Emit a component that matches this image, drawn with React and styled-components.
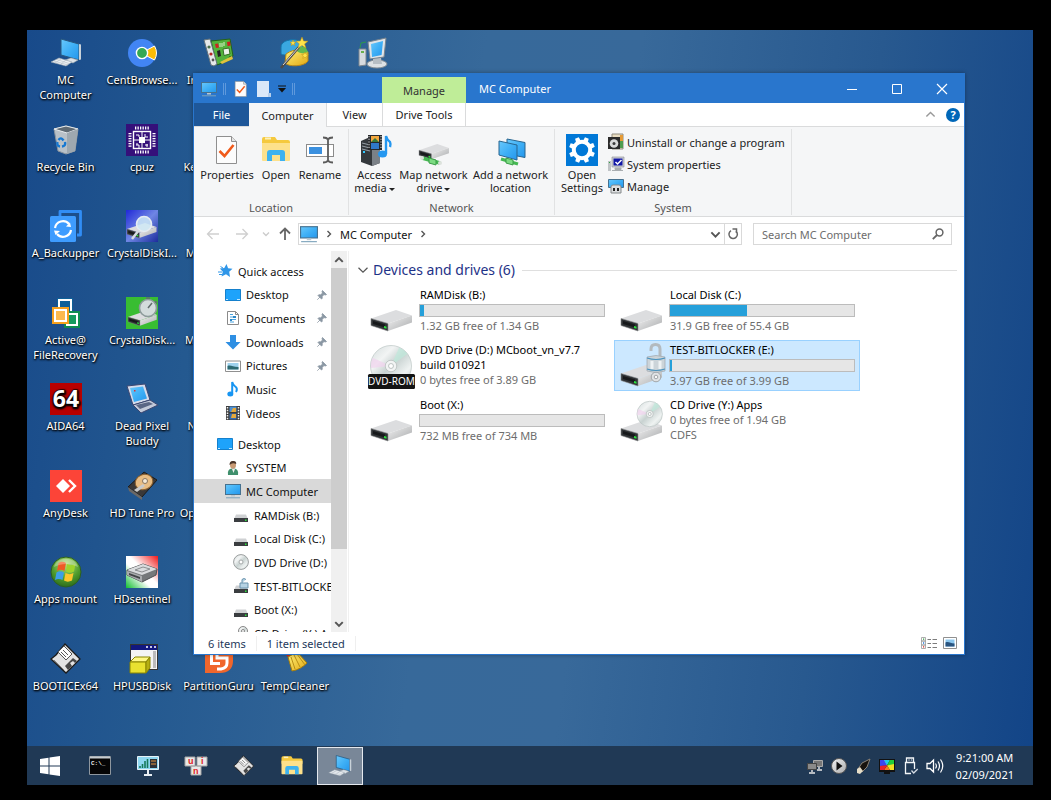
import { useState } from "react";
import styled, { createGlobalStyle } from "styled-components";

const GlobalStyle = createGlobalStyle`
    * {
        box-sizing: border-box;
    }

    body {
        margin: 0;
        background: #000;
        font-family: "Noto Sans", "Open Sans", sans-serif;
        font-size: 11px;
        line-height: 15px;
        color: #111;
    }

    button,
    input {
        font: inherit;
        color: inherit;
        margin: 0;
        padding: 0;
        border: 0;
        background: none;
    }

    svg {
        display: block;
        flex: none;
        overflow: visible;
    }
`;

/* ---------- shell ---------- */

const Frame = styled.div`
    min-height: 100vh;
    padding: 30px 18px 15px 27px;
    display: flex;
`;

const Screen = styled.div`
    position: relative;
    flex: 1;
    min-width: 0;
    display: flex;
    flex-direction: column;
    overflow: hidden;
    background: linear-gradient(97deg, #184a8a 0%, #245990 18%, #37699a 42%, #38699a 56%, #28598f 78%, #124487 100%);
`;

const Desktop = styled.main`
    flex: 1;
    display: grid;
    grid-auto-flow: column;
    grid-template-rows: 87px 86px 87px 86px 87px 86px 87px 86px;
    grid-auto-columns: 77px 76px;
    padding-top: 7px;
`;

const Shortcut = styled.button`
    display: flex;
    flex-direction: column;
    align-items: center;
    gap: 3px;
    color: #fff;
    text-align: center;
    text-shadow: 1px 1px 2px #000, 0 1px 2px #000;
    white-space: pre;
`;

/* ---------- explorer window ---------- */

const Window = styled.section`
    position: absolute;
    top: 43px;
    right: 68px;
    bottom: 130px;
    left: 166px;
    display: flex;
    flex-direction: column;
    border: 1px solid #2976cd;
    background: #fff;
    box-shadow: 0 0 4px rgba(0, 0, 0, 0.35);
`;

const TitleBar = styled.header`
    display: flex;
    height: 29px;
    background: #2976cd;
    color: #fff;
`;

const QuickTools = styled.div`
    width: 188px;
    display: flex;
    align-items: center;
    gap: 6px;
    padding-left: 7px;
`;

const QuickSeparator = styled.i`
    width: 3px;
    height: 12px;
    border: solid #5f99dc;
    border-width: 0 1px;
`;

const ContextTab = styled.div`
    width: 84px;
    margin-top: 3px;
    display: flex;
    align-items: center;
    justify-content: center;
    background: #bfed98;
    color: #333;
`;

const WindowTitle = styled.h1`
    flex: 1;
    margin: 0;
    padding-left: 13px;
    font-size: 11px;
    font-weight: 400;
    line-height: 29px;
`;

const CaptionButton = styled.button`
    width: 45px;
    display: grid;
    place-items: center;
`;

const TabRow = styled.nav`
    display: flex;
    height: 24px;
    border-bottom: 1px solid #dadbdc;
`;

const RibbonTab = styled.button`
    width: ${({ $width }) => $width};
    margin-bottom: ${({ $active }) => ($active ? "-1px" : "0")};
    background: ${({ $active, $file }) => ($file ? "#1e5799" : $active ? "#f5f6f7" : "transparent")};
    color: ${({ $file }) => ($file ? "#fff" : "#222")};
    border-right: ${({ $line }) => ($line ? "1px solid #dadbdc" : "0")};
`;

const TabRowEnd = styled.div`
    flex: 1;
    display: flex;
    align-items: center;
    justify-content: flex-end;
    gap: 10px;
    padding-right: 4px;
`;

const Ribbon = styled.div`
    display: flex;
    height: 90px;
    padding: 2px 0 1px;
    background: #f5f6f7;
    border-bottom: 1px solid #dadbdc;
`;

const RibbonGroup = styled.section`
    width: ${({ $width }) => $width};
    display: flex;
    flex-direction: column;
    justify-content: space-between;
    border-right: 1px solid #e1e2e3;
    color: #222;
`;

const GroupBody = styled.div`
    display: flex;
    justify-content: ${({ $start }) => ($start ? "flex-start" : "center")};
    padding-top: 2px;
    padding-left: ${({ $start }) => ($start ? "5px" : "0")};
`;

const GroupName = styled.span`
    text-align: center;
    color: #555;
`;

const RibbonButton = styled.button`
    width: ${({ $width }) => $width};
    flex: none;
    display: flex;
    flex-direction: column;
    align-items: center;
    gap: 2px;
    padding-top: 3px;
    line-height: 13px;
    white-space: pre;
`;

const MarkWrap = styled.span`
    display: inline-block;
    vertical-align: middle;
    margin-left: 2px;
`;

const RibbonList = styled.div`
    display: flex;
    flex-direction: column;
    padding-left: 4px;
`;

const RibbonListButton = styled.button`
    height: 22px;
    display: flex;
    align-items: center;
    gap: 3px;
    white-space: nowrap;
`;

const AddressRow = styled.div`
    display: flex;
    align-items: center;
    height: 34px;
    padding: 0 12px 0 4px;
`;

const HistoryButton = styled.button`
    width: ${({ $narrow }) => ($narrow ? "19px" : "29px")};
    height: 22px;
    display: grid;
    place-items: center;
`;

const AddressBox = styled.div`
    flex: 1;
    height: 22px;
    display: flex;
    align-items: center;
    gap: 7px;
    margin-left: 4px;
    padding-left: 1px;
    border: 1px solid #d9d9d9;
`;

const AddressTools = styled.div`
    display: flex;
    align-self: stretch;
    margin-left: auto;
`;

const AddressTool = styled.button`
    width: 17px;
    display: grid;
    place-items: center;
    border-left: ${({ $line }) => ($line ? "1px solid #d9d9d9" : "0")};
`;

const SearchBox = styled.label`
    width: 199px;
    height: 22px;
    display: flex;
    align-items: center;
    margin-left: 11px;
    padding: 0 7px 0 8px;
    border: 1px solid #d9d9d9;

    input {
        flex: 1;
        min-width: 0;
        outline: 0;
    }

    input::placeholder {
        color: #6d6d6d;
        opacity: 1;
    }
`;

const Panes = styled.div`
    flex: 1;
    min-height: 0;
    display: flex;
`;

const NavPane = styled.nav`
    width: 137px;
    flex: none;
    overflow: hidden;
    padding-top: 8px;
`;

const NavGroup = styled.div`
    display: grid;
    grid-auto-rows: 24px 23px 24px;
    margin-bottom: 7px;
`;

const NavItem = styled.button`
    display: flex;
    align-items: center;
    gap: 5px;
    min-width: 0;
    padding-left: ${({ $level }) => 23 + $level * 8}px;
    padding-right: 4px;
    background: ${({ $selected }) => ($selected ? "#d9d9d9" : "transparent")};
    white-space: nowrap;

    svg:last-child:not(:first-child) {
        margin-left: auto;
    }
`;

const ScrollBar = styled.div`
    width: 16px;
    flex: none;
    display: flex;
    flex-direction: column;
    background: #f0f0f0;
`;

const ScrollButton = styled.button`
    height: 17px;
    display: grid;
    place-items: center;
`;

const ScrollTrack = styled.div`
    flex: 1;
`;

const ScrollThumb = styled.div`
    background: #cdcdcd;
`;

const Content = styled.div`
    flex: 1;
    min-width: 0;
    margin-left: 1px;
    border-left: 1px solid #f0f0f0;
    padding: 9px 7px 0 8px;
`;

const SectionHead = styled.h2`
    display: flex;
    align-items: center;
    gap: 4px;
    margin: 0;
    font-size: 14px;
    font-weight: 400;
    line-height: 20px;
    color: #1e3287;

    &::after {
        content: "";
        flex: 1;
        height: 1px;
        margin-left: 3px;
        background: #dfdfdf;
    }
`;

const DriveGrid = styled.div`
    display: grid;
    grid-template-columns: repeat(auto-fill, 246px);
    grid-auto-rows: 51px;
    gap: 4px;
    margin-top: 5px;
    padding-left: 7px;
`;

const DriveTile = styled.button`
    display: flex;
    gap: 3px;
    padding: 1px 3px;
    text-align: left;
    border: 1px solid ${({ $selected }) => ($selected ? "#99d1ff" : "transparent")};
    background: ${({ $selected }) => ($selected ? "#cce8ff" : "transparent")};
`;

const DriveText = styled.span`
    flex: none;
    width: 186px;
    display: flex;
    flex-direction: column;
    line-height: 15px;
    white-space: pre-line;
`;

const DriveLine = styled.span`
    padding-left: 1px;
    color: ${({ $muted }) => ($muted ? "#6d6d6d" : "#000")};
`;

const Meter = styled.span`
    height: 13px;
    margin: 2px 0 1px;
    border: 1px solid #bcbcbc;
    background: #e6e6e6;
`;

const MeterFill = styled.span`
    display: block;
    height: 100%;
    background: #26a0da;
`;

const StatusBar = styled.footer`
    display: flex;
    align-items: center;
    height: 22px;
    padding: 0 7px 0 14px;
    color: #1e395b;
`;

const StatusText = styled.span`
    padding-right: 10px;
    margin-right: 10px;
    border-right: 1px solid #efefef;
`;

const ViewSwitch = styled.div`
    display: flex;
    gap: 6px;
    margin-left: auto;
`;

/* ---------- taskbar ---------- */

const Taskbar = styled.footer`
    display: flex;
    height: 39px;
    background: #203955;
    color: #fff;
`;

const StartButton = styled.button`
    width: 46px;
    display: grid;
    place-items: center;
    margin-right: 3px;
`;

const TaskButton = styled.button`
    width: 46px;
    height: 38px;
    margin: 1px 1px 0;
    display: grid;
    place-items: center;
    border: 1px solid ${({ $active }) => ($active ? "#e4e8ee" : "transparent")};
    background: ${({ $active }) => ($active ? "#798798" : "transparent")};
`;

const Tray = styled.div`
    display: flex;
    align-items: center;
    margin-left: auto;
    padding-right: 19px;
`;

const TrayButton = styled.button`
    width: 24px;
    height: 24px;
    display: grid;
    place-items: center;
`;

const Clock = styled.time`
    margin-left: 8px;
    line-height: 17px;
    text-align: center;
    white-space: pre;
`;

/* ---------- icons ---------- */

const GradientSheet = styled.svg`
    position: absolute;
`;

const Svg = ({ w = 32, h = w, box, children }) => (
    <svg width={w} height={h} viewBox={box ?? `0 0 ${w} ${h}`} fill="none" aria-hidden="true">
        {children}
    </svg>
);

const Gradients = () => (
    <GradientSheet width="0" height="0" aria-hidden="true">
        <defs>
            <linearGradient id="screen" x1="0" y1="0" x2="1" y2="1">
                <stop offset="0" stopColor="#69c8fb" />
                <stop offset=".5" stopColor="#3fb0f6" />
                <stop offset="1" stopColor="#2496ec" />
            </linearGradient>
            <linearGradient id="metal" x1="0" y1="0" x2="1" y2="1">
                <stop offset="0" stopColor="#f2f2f2" />
                <stop offset="1" stopColor="#a9abad" />
            </linearGradient>
            <linearGradient id="disc" x1="0" y1="0" x2="1" y2="1">
                <stop offset="0" stopColor="#d3dcdc" />
                <stop offset=".3" stopColor="#f2f4f4" />
                <stop offset=".5" stopColor="#c8d2d1" />
                <stop offset=".75" stopColor="#eff3f2" />
                <stop offset="1" stopColor="#bac5c4" />
            </linearGradient>
            <linearGradient id="indigo" x1="0" y1="0" x2="1" y2="1">
                <stop offset="0" stopColor="#2028d8" />
                <stop offset=".5" stopColor="#6f86e4" />
                <stop offset="1" stopColor="#1c2d9c" />
            </linearGradient>
            <linearGradient id="flag" x1="1" y1="0" x2="0" y2="1">
                <stop offset="0" stopColor="#f01818" />
                <stop offset=".45" stopColor="#fff" />
                <stop offset=".6" stopColor="#fff" />
                <stop offset="1" stopColor="#10c030" />
            </linearGradient>
            <radialGradient id="orb" cx=".5" cy=".25" r=".8">
                <stop offset="0" stopColor="#b6e07a" />
                <stop offset=".6" stopColor="#4e9a2b" />
                <stop offset="1" stopColor="#276418" />
            </radialGradient>
            <linearGradient id="gold" x1="0" y1="0" x2="1" y2="1">
                <stop offset="0" stopColor="#fff27a" />
                <stop offset="1" stopColor="#e2a813" />
            </linearGradient>
        </defs>
    </GradientSheet>
);

const PcIcon = ({ size = 32 }) => (
    <Svg w={size} box="0 0 32 32">
        <path d="m11 2 18 5v16l-18-5z" fill="url(#screen)" stroke="#28587f" />
        <path d="m29 7 2 .4v15l-2 .6z" fill="#c9d2d9" />
        <path d="m20 21 4 1v2l-5-1z" fill="#a4adb5" />
        <path d="m15 23 6-2 7 2-5 3z" fill="#dce2e7" stroke="#98a4ae" strokeWidth=".6" />
        <path d="m1 25 8-4 13 4-6 4z" fill="#eef1f4" stroke="#98a4ae" strokeWidth=".6" />
        <path d="m4 24 14 4M7 22.500l12 4M5 26l6-4m0 5 5-4" stroke="#b4bcc4" strokeWidth=".6" />
    </Svg>
);

const MonitorIcon = ({ size = 16 }) => (
    <Svg w={size} box="0 0 16 16">
        <rect x=".5" y="1.5" width="15" height="10" fill="url(#screen)" stroke="#46718f" />
        <path d="M6 12h4v1.5H6z" fill="#bcc8d0" />
        <path d="M1 14.8h14" stroke="#7da3bb" />
    </Svg>
);

const CentIcon = () => (
    <Svg box="0 0 32 32">
        <circle cx="16" cy="16" r="14" fill="#4285f4" />
        <path d="m19 14 9.500-5a14 14 0 0 1 0 14L19 18z" fill="#fbbc05" stroke="#fff" />
        <circle cx="16" cy="16" r="5.6" fill="#34a853" stroke="#fff" strokeWidth="1.4" />
    </Svg>
);

const CardIcon = () => (
    <Svg box="0 0 32 32">
        <path d="m8 4 19-2 3 17-4 1 1 3-13 5z" fill="#54b23c" stroke="#246118" />
        <path d="m1 3 6-1 7 25-3 2-3-1z" fill="#e6e9ea" stroke="#66747b" />
        <circle cx="6" cy="10" r="1.6" fill="#4b6f49" />
        <circle cx="8" cy="17" r="1.6" fill="#b32525" />
        <circle cx="10" cy="23" r="1.4" fill="#555" />
        <path d="m12 7 3-.6 1 4-3 .6zM24 5l3-.4.6 4-3 .6z" fill="#c22" />
        <path d="m14 14 3-1 1 6-3 1z" fill="#222" />
        <path d="m20 12 6-1 1 6-6 1.5z" fill="#eef3ea" stroke="#347024" />
        <path d="m17 25 12-6 1 3-11 5z" fill="#e0c23e" />
        <path d="M17 6v4m2-4v4m2-5v4" stroke="#d8f0ca" />
    </Svg>
);

const WizardIcon = () => (
    <Svg box="0 0 32 32">
        <path d="M2 10c0-9 20-9 22-3l-1 9C12 15 6 20 2 17z" fill="#3aa8e0" stroke="#1272a8" />
        <path d="M7 17c8-6 20-5 22-2v9c-4 6-20 6-23 2z" fill="url(#gold)" stroke="#b7861a" />
        <path d="M17 13c3 4 8 4 12 2l-3-6-9 2z" fill="#63b94e" />
        <path d="M2 31 20 10" stroke="#4f4b48" strokeWidth="2.6" />
        <path d="M4 28 20 10" stroke="#d8d8d8" />
        <path
            d="m23 0 1.6 4 4.4.2-3.400 2.700L27 11l-4-2.400L19 11l1.200-4.300L17 4.200l4.300-.2zM14 3l.8 2 2.200.2-1.800 1.400.6 2-1.800-1.200-2 1.200.6-2-1.600-1.400 2.200-.2zM26 15l1 2.200 2.400.2-1.800 1.600.6 2.400-2.200-1.200-2.200 1.200.6-2.400-1.800-1.600 2.400-.2z"
            fill="#ffe34a"
            stroke="#be8f12"
            strokeWidth=".5"
        />
    </Svg>
);

const OldPcIcon = () => (
    <Svg box="0 0 32 32">
        <path d="M3 12h7v16l-7 1z" fill="#d7dbdf" stroke="#7d868e" />
        <path d="M5 14h3v2H5z" fill="#6bb04d" />
        <path d="m4 11 1-5 5-1" stroke="#2a9a4b" />
        <ellipse cx="21" cy="27" rx="10" ry="4" fill="#dde1e4" stroke="#858e95" />
        <path d="m17 20 8 1 1 6h-9z" fill="#b7bec4" />
        <path d="m12 5 18-4-2 19-14 2z" fill="#dfe4e8" stroke="#78848e" />
        <path d="m15 7 12-3-1.400 14L16 20z" fill="url(#screen)" />
    </Svg>
);

const BinIcon = () => (
    <Svg box="0 0 32 32">
        <path d="m4 5 12-3 12 3-3 22-9 3-8-3z" fill="#b9c1c8" stroke="#8b959e" />
        <path d="m4 5 13 4 11-4-12-3z" fill="#5f6a73" stroke="#e8edf0" />
        <path d="m17 9 11-4-3 22-8 3z" fill="#9ea8b0" />
        <path d="M8.500 16q2.500-3.500 5 .5M7.500 18q-1 4 2.500 4.500M12 22.500q4-.5 3-4.500" stroke="#1678d2" strokeWidth="2.400" />
    </Svg>
);

const CpuIcon = () => (
    <Svg box="0 0 32 32">
        <path d="M0 0h32v32H0z" fill="#35107a" />
        <rect x="7.500" y="7.500" width="17" height="17" stroke="#fff" strokeWidth="1.400" />
        <path d="M13 13h6v6h-6z" fill="#fff" />
        <path d="M9 4h14M9 28h14M4 9v14M28 9v14" stroke="#fff" strokeWidth="3" strokeDasharray="1.300 1.200" />
        <path d="M16 8v5m0 6v5M8 16h5m6 0h5M10 11h3v2m6-3v3m0 0h3M10 21h3v3m6-3h3M11 19v2m10-1v3" stroke="#fff" />
    </Svg>
);

const BackupIcon = () => (
    <Svg box="0 0 32 32">
        <path d="M10 6V1.500h20.500V25H27" stroke="#318df5" strokeWidth="2.800" strokeLinejoin="round" />
        <rect y="6" width="26" height="26" rx="1.500" fill="#3e9cff" />
        <path d="M5 18a8 8 0 0 1 14-4M21 20a8 8 0 0 1-14 4" stroke="#fff" strokeWidth="2.200" />
        <path d="m21 17-5-.5 4-4zM4 20.500l6 .5-4.500 4z" fill="#fff" />
    </Svg>
);

const DriveBody = ({ x = 0, y = 0, s = 1 }) => (
    <g transform={`translate(${x} ${y}) scale(${s})`}>
        <path d="M0 8.500 25 0l16 5.500-24 8z" fill="#dcdddf" />
        <path d="m17 13.500 24-8v7L17 21z" fill="url(#metal)" />
        <path d="m0 8.500 17 5V21L0 15.500z" fill="#303336" stroke="#8b8d8f" strokeWidth=".6" />
        <path d="m2 11 12 3.500v3L2 14z" fill="#17191b" />
        <path d="m13 16 2.500.7v2L13 18z" fill="#2be53c" />
    </g>
);

const InfoIcon = () => (
    <Svg box="0 0 32 32">
        <path d="M0 0h32v32H0z" fill="url(#indigo)" />
        <DriveBody x={1} y={13} s={0.72} />
        <circle cx="18" cy="14" r="7.500" fill="#cfe9f6" fillOpacity=".85" stroke="#e6edf2" strokeWidth="1.600" />
        <path d="m13 20-7 9" stroke="#d6dce2" strokeWidth="2.600" />
    </Svg>
);

const MarkIcon = () => (
    <Svg box="0 0 32 32">
        <path d="M0 0h32v32H0z" fill="#38bd32" />
        <DriveBody x={2} y={14} s={0.7} />
        <circle cx="22" cy="11" r="8.500" fill="#d3dcdc" stroke="#8d9b9b" strokeWidth="1.600" />
        <path d="M20 1h4m5 3 2 2m-9 5 4-5" stroke="#626e6e" strokeWidth="1.500" />
    </Svg>
);

const RecoveryIcon = () => (
    <Svg box="0 0 32 32">
        <path d="M7 1h16v14H7z" fill="#0e6098" />
        <rect x="9" y="3" width="12" height="12" stroke="#fff" strokeWidth="2" />
        <path d="M14 14h16v17H14z" fill="#0e8c50" />
        <rect x="17" y="17" width="10" height="11" fill="#149b5d" stroke="#fff" strokeWidth="2" />
        <path d="M2 10h17v17H2z" fill="#f6a01d" />
        <rect x="5" y="13" width="11" height="11" fill="#fcb94d" stroke="#fff" strokeWidth="2" />
    </Svg>
);

const AidaIcon = () => (
    <Svg box="0 0 32 32">
        <path d="M0 0h32v32H0z" fill="#b80000" />
        <text
            x="16"
            y="24"
            textAnchor="middle"
            fontFamily="Open Sans"
            fontSize="23"
            fontWeight="700"
            fill="#fff"
            stroke="#3a0000"
            strokeWidth="1.500"
            paintOrder="stroke"
        >
            64
        </text>
    </Svg>
);

const LaptopIcon = () => (
    <Svg box="0 0 32 32">
        <path d="m1 3 18-2 5 16-17 5z" fill="#d5dbea" stroke="#3c4771" />
        <path d="m4 5 13-1.500 4 12L8 19z" fill="url(#screen)" />
        <path d="m7 22 17-5 8 5-17 8z" fill="#c2c9d9" stroke="#3c4771" />
        <path d="m10 22 13-3 4 2-13 5z" fill="#5a6685" />
        <path d="M8 7h1.500v1.500H8z" fill="#d33" />
    </Svg>
);

const AnyDeskIcon = () => (
    <Svg box="0 0 32 32">
        <path d="M0 0h32v32H0z" fill="#fc4438" />
        <path d="m13 9 7 7-7 7-7-7z" fill="#fff" />
        <path d="m19 10 6 6-6 6" stroke="#fff" strokeWidth="2.400" />
    </Svg>
);

const TuneIcon = () => (
    <Svg box="0 0 32 32">
        <path d="M2 17 18 2l13 8-15 17z" fill="#3a3838" stroke="#1c1b1b" />
        <path d="m2 17 14 10v3L3 21z" fill="#6b6866" />
        <ellipse cx="18" cy="12" rx="9" ry="7.500" transform="rotate(-20 18 12)" fill="#e8bd84" stroke="#8a6132" />
        <circle cx="19" cy="11" r="2.500" fill="#f5ead8" stroke="#8a7660" />
        <path d="m8 20 9-6 2 2-8 6z" fill="#c9c9c9" />
    </Svg>
);

const OrbIcon = () => (
    <Svg box="0 0 32 32">
        <circle cx="16" cy="16" r="15" fill="url(#orb)" stroke="#2c5f20" />
        <path d="M8.500 7c3-2 5-1.500 7.500 0L14.500 15c-3-1.600-5-1.600-7.500 0z" fill="#ee5a24" />
        <path d="M17 8c2.500 1.500 5 1.500 8.500 0L24 15.500c-3 1.600-5 1.600-8 0z" fill="#9fd42c" />
        <path d="M6.500 16.500c3-1.600 5-1.600 7.500 0L12.500 24c-2.500-1.500-5-1.500-7.500 0z" fill="#3d9fe8" />
        <path d="M15.500 17c3 1.500 5 1.500 8 0L22 24.500c-3 1.500-5.500 1.500-8 0z" fill="#fcc52c" />
        <path d="M4 11C6 0 26 0 28 11 20 7 12 7 4 11z" fill="#fff" fillOpacity=".3" />
    </Svg>
);

const SentinelIcon = () => (
    <Svg box="0 0 32 32">
        <path d="M0 0h32v32H0z" fill="url(#flag)" />
        <path d="m1 14 16-6 14 5-1 6-14 7-15-7z" fill="#75787a" stroke="#4c4f51" />
        <path d="m1 14 16-6 14 5-15 6z" fill="#dadcde" />
        <path d="m1 15 15 5v6L1 19z" fill="#a9acae" />
        <path d="m3 17 11 4v2L3 19z" fill="#424547" />
        <path d="m9 14 8-3 7 2-8 3z" stroke="#8b8e90" />
    </Svg>
);

const DisketteIcon = ({ size = 32 }) => (
    <Svg w={size} box="0 0 32 32">
        <path d="m15 1 15 15-14 14L1 16l5-4z" fill="#e3e3e3" stroke="#1c1c1c" strokeWidth="1.300" />
        <path d="m8 9 6-6 8 8-6 6z" fill="#fdfdfd" stroke="#555" />
        <path d="m11 9 5 5m-3-7 5 5" stroke="#555" />
        <path d="m15 23 8-8 4 3-9 9z" fill="#484848" />
        <path d="m20 20 3-2 2 2-3 3z" fill="#e3e3e3" />
        <path d="m4 17 10 10" stroke="#888" />
    </Svg>
);

const HpIcon = () => (
    <Svg box="0 0 32 32">
        <rect x="4.500" y="1.500" width="27" height="25" fill="#f4f4f4" stroke="#333" />
        <path d="M5 2h26v5H5z" fill="#121780" />
        <path d="M20 4h2m2 0h2m2 0h2" stroke="#fff" strokeWidth="1.500" />
        <path d="M27 8h3v17h-3z" fill="#bbb" />
        <path d="m4 19 5-5h15l-4 5z" fill="#fff885" stroke="#8a8500" />
        <path d="M4 19h16v11H4z" fill="#e9e130" stroke="#8a8500" />
        <path d="m20 19 4-5v11l-4 5z" fill="#b5ae13" stroke="#8a8500" />
    </Svg>
);

const GuruIcon = () => (
    <Svg box="0 0 32 32">
        <path d="M2 0h28v18c0 8-5 12-13 12H2z" fill="#f0662c" />
        <path d="M8.500 8v12.500H17M14 8v7h10v5q0 5-6 6h-4" stroke="#fff" strokeWidth="3" />
    </Svg>
);

const BroomIcon = () => (
    <Svg box="0 0 32 32">
        <path d="m3 0 8 8" stroke="#9a4b12" strokeWidth="3" />
        <path d="m7 12 8-6 5 5-8 6z" fill="#d02a20" />
        <path d="m9 14 9-5 10 11c-4 4-9 7-15 8z" fill="url(#gold)" stroke="#a67d0c" />
        <path d="m12 14 4 12m-1-14 6 12m-3-13 8 11" stroke="#b98f17" />
    </Svg>
);

const CheckPageIcon = ({ size = 32 }) => (
    <Svg w={size} box="0 0 32 32">
        <path d="M5.500 2.500h15l5 5v22h-20z" fill="#fcfcfc" stroke="#8f8f8f" />
        <path d="M20.500 2.500v5h5" fill="#e5e5e5" stroke="#8f8f8f" />
        <path d="m8.500 17 5 5 9-11" stroke="#f05a1a" strokeWidth="2.600" />
    </Svg>
);

const BlankPageIcon = () => (
    <Svg w={16}>
        <path d="M1 0h12v12l2 4H1z" fill="#dbe8f8" />
        <path d="M12 12h3v4h-3z" fill="#b6cfec" />
    </Svg>
);

const FolderIcon = ({ size = 32 }) => (
    <Svg w={size} box="0 0 32 32">
        <path d="M2 5q0-2 2-2h11l2 3h11q2 0 2 2v5H2z" fill="#f5c93e" />
        <path d="M2 9h28v17q0 1-1 1H3q-1 0-1-1z" fill="#fde18b" />
        <path d="M5 4.500h6" stroke="#fdf0bb" strokeWidth="2" />
        <path d="M7 27v-8q0-3 3-3h12q3 0 3 3v8h-5v-6h-8v6z" fill="#3db2ef" />
    </Svg>
);

const RenameIcon = () => (
    <Svg box="0 0 32 32">
        <rect x="2.500" y="10.500" width="27" height="12" fill="#fff" stroke="#8b8b8b" />
        <path d="M5 13h13v7H5z" fill="#3b90df" />
        <path d="M19 3.500q4 0 5 2 1-2 5-2M24 5v22M19 28.500q4 0 5-2 1 2 5 2" stroke="#5b5b5b" strokeWidth="1.800" />
    </Svg>
);

const MediaIcon = () => (
    <Svg box="0 0 32 32">
        <path d="m2 7 9-4 10 2v24l-8 3-11-4z" fill="#34383c" />
        <path d="m13 9 8-3v23l-8 3z" fill="#7b8187" />
        <path d="m3 9 8 2m-8 1 8 2m-8 1 8 2" stroke="#98a0a8" />
        <path d="M4 17h2v2H4z" fill="#30c8ff" />
        <path d="M9 1h14v15H9z" fill="#26282b" />
        <path d="M12 2h8v6h-8z" fill="#f2a73e" />
        <path d="M12 9h8v6h-8z" fill="#2f78c8" />
        <path d="m12 8 4-4 4 4z" fill="#377a3b" />
        <path d="M10 2v13m12-13v13" stroke="#e5e5e5" strokeDasharray="1.200 1.500" />
        <path d="M27 20V2q1 4 4 6 1 2 0 5" stroke="#2497f0" strokeWidth="2.400" />
        <ellipse cx="23.500" cy="20" rx="4.500" ry="3.600" fill="#2497f0" />
    </Svg>
);

const MapDriveIcon = () => (
    <Svg box="0 0 32 32">
        <DriveBody x={1} y={10} s={0.73} />
        <path d="m4 24 18 5" stroke="#45b852" strokeWidth="3.600" />
        <path d="m11 24 7 2v5l-7-2z" fill="#7cdb82" stroke="#3b9c48" />
        <circle cx="4" cy="24" r="2" fill="#dce2dc" />
        <circle cx="22" cy="29" r="2" fill="#dce2dc" />
    </Svg>
);

const AddNetIcon = () => (
    <Svg box="0 0 32 32">
        <path d="m12 5 18 3.500v15L12 20z" fill="url(#screen)" stroke="#28658f" />
        <path d="m4 7 18 4v15L4 21z" fill="url(#screen)" stroke="#28658f" />
        <path d="m6 25 17 5" stroke="#45b852" strokeWidth="3.200" />
        <path d="m11 24 7 2v5l-7-2z" fill="#7cdb82" stroke="#3b9c48" />
    </Svg>
);

const GearIcon = () => (
    <Svg box="0 0 32 32">
        <path d="M0 0h32v32H0z" fill="#0078d7" />
        <circle cx="16" cy="16" r="8.200" stroke="#fff" strokeWidth="4" />
        {[0, 45, 90, 135, 180, 225, 270, 315].map((angle) => (
            <path key={angle} d="m13.500 7 .5-4h4l.5 4z" fill="#fff" transform={`rotate(${angle + 22} 16 16)`} />
        ))}
    </Svg>
);

const UninstallIcon = () => (
    <Svg w={16}>
        <path d="M4 0h11v15H4z" fill="#e8dcc0" stroke="#8f8a7c" />
        <path d="M12 1h3v6h-3z" fill="#e59a35" />
        <path d="M12 7h3v7h-3z" fill="#4f9d50" />
        <path d="M0 3h12v12H0z" fill="#2b2b2b" />
        <circle cx="6" cy="9.500" r="4.300" fill="#dadada" />
        <circle cx="6" cy="9.500" r="1.500" fill="#3c3c3c" />
    </Svg>
);

const PropsIcon = () => (
    <Svg w={16}>
        <path d="M0 5h3v10H0z" fill="#bfc3c6" />
        <path d="M1 6h1v1H1z" fill="#2aa53a" />
        <path d="M4 1h12v10H4z" fill="#cdd1d4" stroke="#878c90" strokeWidth=".6" />
        <path d="M5.500 2.500h9v7h-9z" fill="#1217a6" />
        <path d="m7.500 6 2 2 4-4" stroke="#fff" strokeWidth="1.500" />
        <path d="M7 12h6v1.500H7zM4 14.500h11" fill="#a9adb0" stroke="#a9adb0" />
    </Svg>
);

const ManageIcon = () => (
    <Svg w={16}>
        <path d="M.5 1.500h15v8H.5z" fill="url(#screen)" stroke="#46718f" />
        <path d="M3 9q0-2 2-2h6q2 0 2 2v6H3z" fill="#dcdedf" stroke="#85898b" />
        <path d="M5 10h2v3H5zm4 0h2v3H9z" fill="#222" />
    </Svg>
);

const HelpIcon = () => (
    <Svg w={14}>
        <circle cx="7" cy="7" r="7" fill="#0067b8" />
        <text x="7" y="11" textAnchor="middle" fontFamily="Noto Sans" fontSize="11" fontWeight="700" fill="#fff">
            ?
        </text>
    </Svg>
);

const Chevron = ({ turn = 0, size = 8, color = "#555", weight = 1.4 }) => (
    <Svg w={size} box="0 0 8 8">
        <path d="m1 2.500 3 3 3-3" stroke={color} strokeWidth={weight} transform={`rotate(${turn} 4 4)`} />
    </Svg>
);

const Arrow = ({ turn = 0, color = "#cfcfcf", weight = 1.3 }) => (
    <Svg w={14}>
        <path d="M13 7H1.500m5-5-5 5 5 5" stroke={color} strokeWidth={weight} transform={`rotate(${turn} 7 7)`} />
    </Svg>
);

const RefreshIcon = () => (
    <Svg w={12}>
        <path d="M9 3.200A4.200 4.200 0 1 1 4 2.700" stroke="#666" strokeWidth="1.500" />
        <path d="M5.500 1h4v4" stroke="#666" strokeWidth="1.500" />
    </Svg>
);

const SearchIcon = () => (
    <Svg w={12}>
        <circle cx="7.500" cy="4.500" r="3.400" stroke="#666" strokeWidth="1.500" />
        <path d="m5 7-4.200 4.200" stroke="#666" strokeWidth="1.800" />
    </Svg>
);

const MenuMark = () => (
    <MarkWrap>
        <Svg w={6} h={3}>
            <path d="M0 0h6L3 3z" fill="#222" />
        </Svg>
    </MarkWrap>
);

const StarIcon = () => (
    <Svg w={16}>
        <path d="m9.500 1 1.600 4.200 4.400.5-3.300 3 .8 5.300-4-2.800-4.500 2.300 1.300-4.800-3-3.200 4.500-.4z" fill="#2f96e8" />
        <path d="M1 9h4m-3 2.500h3M3.500 3.500 6 5" stroke="#2f96e8" />
    </Svg>
);

const DeskIcon = () => (
    <Svg w={16}>
        <path d="M.5 2.500h15v11H.5z" fill="#1ea3fb" stroke="#1580cc" />
        <path d="M1 12.500h2m9 0h3" stroke="#c5e8ff" />
    </Svg>
);

const DocIcon = () => (
    <Svg w={16}>
        <path d="M2.500 1.500h8l3 3v10h-11z" fill="#fff" stroke="#8a8a8a" />
        <path d="M10.500 1.500v3h3" stroke="#8a8a8a" />
        <path d="M5 4.500h3M5 7h6M5 9.500h6M5 12h4" stroke="#4aa4e0" />
        <path d="M8 6h3v2H8zM5 9h2v2H5z" fill="#2c86c7" />
    </Svg>
);

const DownIcon = () => (
    <Svg w={16}>
        <path d="M5 1h6v7h4.500L8 15.500.5 8H5z" fill="#2e8fe3" />
    </Svg>
);

const PicIcon = () => (
    <Svg w={16}>
        <path d="M.5 3h15v10.500H.5z" fill="#fff" stroke="#909090" />
        <path d="M2.500 5h11v6.500h-11z" fill="#9fd2ee" />
        <path d="M2.500 8c3-1.500 5 1 11 1v2.500h-11z" fill="#2d6a72" />
    </Svg>
);

const LargeViewIcon = () => (
    <Svg w={14} h={12}>
        <path d="M.5.500h13v11H.5z" fill="#fff" stroke="#909090" />
        <path d="M2.500 2.500h9v7h-9z" fill="#8cc8f0" />
        <path d="M2.500 5.500c3-1.500 5 1 9 1v3h-9z" fill="#2a5580" />
    </Svg>
);

const MusicIcon = () => (
    <Svg w={16}>
        <path d="M7.200 12.500V1q.6 3 3 4.500Q13 7.500 11 11" stroke="#1795f2" strokeWidth="2" />
        <ellipse cx="5.300" cy="13" rx="3" ry="2.500" fill="#1795f2" />
    </Svg>
);

const VideoIcon = () => (
    <Svg w={16}>
        <path d="M1 1h14v14H1z" fill="#3c3c3c" />
        <path d="M4.500 1.500h7V7h-7z" fill="#4b8fd2" />
        <path d="M4.500 8.500h7v6h-7z" fill="#3a6dae" />
        <path d="M8 3h3v4H6zM7 9h4v4H6z" fill="#e6a93b" />
        <path d="M2.500 2v13m11-13v13" stroke="#f2f2f2" strokeWidth="1.500" strokeDasharray="1.500 1.200" />
    </Svg>
);

const UserIcon = () => (
    <Svg w={16}>
        <path d="M3 15q-1-6 4-6.500h2q5 .5 4 6.500z" fill="#3f8f6c" />
        <path d="M7 9h3l-1.500 4z" fill="#eee" />
        <ellipse cx="8" cy="5" rx="3" ry="3.800" fill="#c99a73" />
        <path d="M4.500 5q0-4.500 4-4 3 0 2.700 3Q8 2.500 6 4z" fill="#4a352a" />
    </Svg>
);

const SmallDrive = ({ lock, disc }) => (
    <Svg w={16}>
        <path d="M3 7.500h10l1.500 3.500h-13z" fill="#cfd1d3" />
        <path d="M1 11h14v4H1z" fill="#3a3d40" />
        <path d="M12 12.500h1.500V14H12z" fill="#2be53c" />
        {lock && <path d="M7 5h8v5H7zM9 5V1.500q2-2 4 0" fill="#b7d3e4" stroke="#6a93ad" />}
        {disc && <circle cx="10" cy="6" r="4.500" fill="url(#disc)" stroke="#888" />}
        {disc && <circle cx="10" cy="6" r="1.500" fill="#fff" stroke="#888" />}
    </Svg>
);

const SmallDisc = () => (
    <Svg w={16}>
        <circle cx="8" cy="8" r="7.400" fill="url(#disc)" stroke="#9a9e9e" />
        <circle cx="8" cy="8" r="2" fill="#fff" stroke="#a5a9a9" />
    </Svg>
);

const PinIcon = () => (
    <Svg w={10}>
        <path
            d="m5.500.5 4 4-1.300.5L7 4.500l-1.800 2v2L4.500 9 1 5.500l.7-.7h2L5.500 3 5 1.500zM3 7 .3 9.700"
            fill="#8a97a3"
            stroke="#8a97a3"
            strokeWidth=".8"
        />
    </Svg>
);

const Disc = ({ cx, cy, r }) => (
    <g>
        <circle cx={cx} cy={cy} r={r} fill="url(#disc)" stroke="#bcc5c4" strokeWidth=".7" />
        <path
            d={`M${cx} ${cy} ${cx + r * 0.4} ${cy - r * 0.9} A${r} ${r} 0 0 1 ${cx + r * 0.8} ${cy - r * 0.6}z`}
            fill="#bfeadb"
            fillOpacity=".7"
        />
        <path
            d={`M${cx} ${cy} ${cx - r * 0.98} ${cy + r * 0.1} A${r} ${r} 0 0 1 ${cx - r * 0.9} ${cy - r * 0.4}z`}
            fill="#f1d3ee"
            fillOpacity=".7"
        />
        <circle cx={cx} cy={cy} r={r * 0.28} fill="#f2f4f4" stroke="#b3bab9" strokeWidth=".7" />
        <circle cx={cx} cy={cy} r={r * 0.12} fill="#fff" stroke="#a5adac" strokeWidth=".7" />
    </g>
);

const DriveIcon = ({ kind }) => (
    <Svg w={48} h={48}>
        {kind !== "dvd" && <DriveBody x={3} y={23} />}
        {kind === "dvd" && (
            <g>
                <Disc cx={23} cy={24} r={20.5} />
                <rect y="32" width="47" height="15" rx="1.500" fill="#141414" />
                <text x="23.500" y="43" textAnchor="middle" fontFamily="Noto Sans" fontSize="10" fill="#fff">
                    DVD-ROM
                </text>
            </g>
        )}
        {kind === "cd" && <Disc cx={31.7} cy={17} r={12.7} />}
        {kind === "locked" && (
            <g>
                <path d="M33 9V7q0-4.500 4.500-4.500T42 7v8" stroke="#b3babf" strokeWidth="3" />
                <path d="M29 15q9-3 18 0v14q-9 3-18 0z" fill="#ccd4d9" stroke="#9ba5ac" strokeWidth=".7" />
                <path d="M29 16q9 3 18 0M29 27q9 3 18 0" stroke="#4a93bf" strokeWidth="1.200" />
                <path d="M34 19v8m8-8v8" stroke="#eef2f4" strokeWidth="3" />
                <circle cx="38" cy="35" r="4.800" fill="#dfe2e4" stroke="#a1a6a9" />
                <circle cx="38" cy="35" r="1.800" fill="#f8f8f8" stroke="#a1a6a9" />
            </g>
        )}
    </Svg>
);

const ListViewIcon = () => (
    <Svg w={16} h={12}>
        <path d="M.5.500h4V4h-4zm0 3.500h4v4h-4zm0 4h4v3.500h-4z" stroke="#999" strokeWidth=".8" />
        <path d="M2 2.200h1.200" stroke="#2a9a3a" strokeWidth="1.300" />
        <path d="M2 6h1.200" stroke="#2679dd" strokeWidth="1.300" />
        <path d="M2 9.800h1.200" stroke="#d22" strokeWidth="1.300" />
        <path d="M6.500 2.500H10m1.500 0H16m-9.500 4H10m1.500 0H16m-9.500 4H10m1.500 0H16" stroke="#7c7c7c" />
    </Svg>
);

const StartIcon = () => (
    <Svg w={20}>
        <path
            d="m0 3 8.500-1.200v7.700H0zM9.500 1.600 20 0v9.500H9.500zM0 10.500h8.500v7.700L0 17zM9.500 10.500H20V20L9.500 18.400z"
            fill="#fff"
        />
    </Svg>
);

const ConsoleIcon = () => (
    <Svg w={22} h={20}>
        <path d="M.5.500h21v18H.5z" fill="#050505" stroke="#8f979e" />
        <path d="M1 1.500h20" stroke="#c7ccd0" strokeWidth="2" />
        <text x="2" y="9" fontFamily="Liberation Mono" fontSize="6" fontWeight="700" fill="#eee">
            C:\_
        </text>
    </Svg>
);

const NetMonitorIcon = () => (
    <Svg w={22} h={20}>
        <path d="M.5.500h21v13H.5z" fill="#8fd8f2" stroke="#e5f2f8" />
        <path d="M3 12v-2m2.500 2V8M8 12V5m2.500 7V3" stroke="#167a5a" strokeWidth="1.600" />
        <path d="M13 3h7v9h-7z" fill="#2b3137" />
        <path d="M14 5h5m-5 3h5" stroke="#e2903a" />
        <path d="M11 14v4m-4 1h8" stroke="#e8eef2" strokeWidth="2" />
    </Svg>
);

const KeysIcon = () => (
    <Svg w={22} h={20}>
        <path d="M0 1h10v9H0zm12 0h10v9H12zM6 10h10v9H6z" fill="#e8e8e8" stroke="#a6a6a6" />
        <text fontFamily="Liberation Sans" fontSize="9" fontWeight="700" fill="#e01b24">
            <tspan x="3" y="8">
                u
            </tspan>
            <tspan x="16" y="8">
                i
            </tspan>
            <tspan x="8" y="18">
                n
            </tspan>
        </text>
    </Svg>
);

const TrayNetIcon = () => (
    <Svg w={16}>
        <path d="M6.500 2.500h9v6h-9z" fill="#777" stroke="#aaa" />
        <path d="M.5 5.500h9v6h-9z" fill="#8a8a8a" stroke="#444" />
        <path d="M5 12v2m-3 1h6m4-6v2m-2 1h5" stroke="#e8e8e8" strokeWidth="1.400" />
    </Svg>
);

const TrayPlayIcon = () => (
    <Svg w={16}>
        <circle cx="8" cy="8" r="7.500" fill="url(#metal)" stroke="#555" />
        <path d="m5.500 3.500 6 4.500-6 4.500z" fill="#111" />
    </Svg>
);

const TrayPlugIcon = () => (
    <Svg w={16}>
        <path d="m15 1-3 8-5 5-4-3 4-6z" fill="#17130f" stroke="#8b8276" />
        <path d="m2 11 3-2 3 4-3 3-3-1z" fill="#e5ddc8" />
    </Svg>
);

const TrayColorIcon = () => (
    <Svg w={16}>
        <path d="M0 1h16v13H0z" fill="#111" />
        <path d="M1 2h7v5.500H1z" fill="#e33ad0" />
        <path d="M1 2h4l3 5-7 1z" fill="#3a46f0" />
        <path d="M5 2h6L8 7.500z" fill="#20c8e8" />
        <path d="M11 2h4v6l-7-.5z" fill="#22cc3a" />
        <path d="M15 6v6h-4L8 7.500z" fill="#f2e022" />
        <path d="M11 12H5l3-4.500z" fill="#f47a1c" />
        <path d="M5 12H1V8l7-.5z" fill="#e8222e" />
        <path d="M5 15h6" stroke="#111" strokeWidth="2" />
    </Svg>
);

const TrayUsbIcon = () => (
    <Svg w={14} h={18}>
        <path d="M2.500 5.500V1h7v4.500M5 2.500v1m2.500-1v1M7 16.500H1.500v-11h9V12" stroke="#f2f5f8" strokeWidth="1.300" />
        <path d="m7.500 13.500 2.200 2.500 4-4" stroke="#d5dce4" strokeWidth="1.300" />
    </Svg>
);

const TraySoundIcon = () => (
    <Svg w={18} h={16}>
        <path d="M1 5.500h3L7.500 2v12L4 10.500H1z" stroke="#fff" strokeWidth="1.300" />
        <path d="M9.500 5.500q1.800 2.500 0 5M12 3.500q3 4.500 0 9m2.500-11q4.500 6.500 0 13" stroke="#fff" strokeWidth="1.200" />
    </Svg>
);

/* ---------- data ---------- */

const columns = [
    [
        ["MC\nComputer", PcIcon],
        ["Recycle Bin", BinIcon],
        ["A_Backupper", BackupIcon],
        ["Active@\nFileRecovery", RecoveryIcon],
        ["AIDA64", AidaIcon],
        ["AnyDesk", AnyDeskIcon],
        ["Apps mount", OrbIcon],
        ["BOOTICEx64", DisketteIcon],
    ],
    [
        ["CentBrowse...", CentIcon],
        ["cpuz", CpuIcon],
        ["CrystalDiskI...", InfoIcon],
        ["CrystalDisk...", MarkIcon],
        ["Dead Pixel\nBuddy", LaptopIcon],
        ["HD Tune Pro", TuneIcon],
        ["HDsentinel", SentinelIcon],
        ["HPUSBDisk", HpIcon],
    ],
    [
        ["InstallDriver", CardIcon],
        ["KeyboardTest", FolderIcon],
        ["MacriumRefl", FolderIcon],
        ["MiniToolPW6", FolderIcon],
        ["NTPWEditor", FolderIcon],
        ["OpenHardwa...", FolderIcon],
        ["Partition", FolderIcon],
        ["PartitionGuru", GuruIcon],
    ],
    [["Partition", WizardIcon], null, null, null, null, null, null, ["TempCleaner", BroomIcon]],
    [["Remote", OldPcIcon]],
];

const navGroups = [
    [
        { label: "Quick access", icon: <StarIcon />, level: 0 },
        { label: "Desktop", icon: <DeskIcon />, level: 1, pinned: true },
        { label: "Documents", icon: <DocIcon />, level: 1, pinned: true },
        { label: "Downloads", icon: <DownIcon />, level: 1, pinned: true },
        { label: "Pictures", icon: <PicIcon />, level: 1, pinned: true },
        { label: "Music", icon: <MusicIcon />, level: 1 },
        { label: "Videos", icon: <VideoIcon />, level: 1 },
    ],
    [
        { label: "Desktop", icon: <DeskIcon />, level: 0 },
        { label: "SYSTEM", icon: <UserIcon />, level: 1 },
        { label: "MC Computer", icon: <MonitorIcon />, level: 1, selected: true },
        { label: "RAMDisk (B:)", icon: <SmallDrive />, level: 2 },
        { label: "Local Disk (C:)", icon: <SmallDrive />, level: 2 },
        { label: "DVD Drive (D:)", icon: <SmallDisc />, level: 2 },
        { label: "TEST-BITLOCKER (E:)", icon: <SmallDrive lock />, level: 2 },
        { label: "Boot (X:)", icon: <SmallDrive />, level: 2 },
        { label: "CD Drive (Y:) Apps", icon: <SmallDrive disc />, level: 2 },
    ],
];

const drives = [
    { id: "B", name: "RAMDisk (B:)", used: 2, detail: "1.32 GB free of 1.34 GB" },
    { id: "C", name: "Local Disk (C:)", used: 42, detail: "31.9 GB free of 55.4 GB" },
    { id: "D", name: "DVD Drive (D:) MCboot_vn_v7.7\nbuild 010921", detail: "0 bytes free of 3.89 GB", kind: "dvd" },
    { id: "E", name: "TEST-BITLOCKER (E:)", used: 1, detail: "3.97 GB free of 3.99 GB", kind: "locked" },
    { id: "X", name: "Boot (X:)", used: 0, detail: "732 MB free of 734 MB" },
    { id: "Y", name: "CD Drive (Y:) Apps", detail: "0 bytes free of 1.94 GB\nCDFS", kind: "cd" },
];

/* ---------- parts ---------- */

function LargeButton({ width, icon, label, menu }) {
    return (
        <RibbonButton type="button" $width={width}>
            {icon}
            <span>
                {label}
                {menu && <MenuMark />}
            </span>
        </RibbonButton>
    );
}

function ExplorerWindow() {
    const [selected, setSelected] = useState("E");

    return (
        <Window aria-label="MC Computer">
            <TitleBar>
                <QuickTools>
                    <MonitorIcon />
                    <QuickSeparator />
                    <CheckPageIcon size={18} />
                    <BlankPageIcon />
                    <Svg w={8} h={8}>
                        <path d="M0 1h8" stroke="#111" />
                        <path d="M0 3h8L4 7.500z" fill="#111" />
                    </Svg>
                    <QuickSeparator />
                </QuickTools>
                <ContextTab>Manage</ContextTab>
                <WindowTitle>MC Computer</WindowTitle>
                <CaptionButton type="button" aria-label="Minimize">
                    <Svg w={10}>
                        <path d="M0 5.500h10" stroke="#fff" />
                    </Svg>
                </CaptionButton>
                <CaptionButton type="button" aria-label="Maximize">
                    <Svg w={10}>
                        <path d="M.5.500h9v9h-9z" stroke="#fff" />
                    </Svg>
                </CaptionButton>
                <CaptionButton type="button" aria-label="Close">
                    <Svg w={10}>
                        <path d="m0 0 10 10M10 0 0 10" stroke="#fff" strokeWidth="1.200" />
                    </Svg>
                </CaptionButton>
            </TitleBar>

            <TabRow>
                <RibbonTab type="button" $width="55px" $file>
                    File
                </RibbonTab>
                <RibbonTab type="button" $width="78px" $active $line>
                    Computer
                </RibbonTab>
                <RibbonTab type="button" $width="56px" $line>
                    View
                </RibbonTab>
                <RibbonTab type="button" $width="83px" $line>
                    Drive Tools
                </RibbonTab>
                <TabRowEnd>
                    <Chevron turn={180} size={11} color="#999" weight={1} />
                    <HelpIcon />
                </TabRowEnd>
            </TabRow>

            <Ribbon>
                <RibbonGroup $width="155px">
                    <GroupBody>
                        <LargeButton width="56px" icon={<CheckPageIcon />} label="Properties" />
                        <LargeButton width="42px" icon={<FolderIcon />} label="Open" />
                        <LargeButton width="46px" icon={<RenameIcon />} label="Rename" />
                    </GroupBody>
                    <GroupName>Location</GroupName>
                </RibbonGroup>
                <RibbonGroup $width="206px">
                    <GroupBody>
                        <LargeButton width="42px" icon={<MediaIcon />} label={"Access\nmedia"} menu />
                        <LargeButton width="76px" icon={<MapDriveIcon />} label={"Map network\ndrive"} menu />
                        <LargeButton width="78px" icon={<AddNetIcon />} label={"Add a network\nlocation"} />
                    </GroupBody>
                    <GroupName>Network</GroupName>
                </RibbonGroup>
                <RibbonGroup $width="237px">
                    <GroupBody $start>
                        <LargeButton width="44px" icon={<GearIcon />} label={"Open\nSettings"} />
                        <RibbonList>
                            <RibbonListButton type="button">
                                <UninstallIcon />
                                Uninstall or change a program
                            </RibbonListButton>
                            <RibbonListButton type="button">
                                <PropsIcon />
                                System properties
                            </RibbonListButton>
                            <RibbonListButton type="button">
                                <ManageIcon />
                                Manage
                            </RibbonListButton>
                        </RibbonList>
                    </GroupBody>
                    <GroupName>System</GroupName>
                </RibbonGroup>
            </Ribbon>

            <AddressRow>
                <HistoryButton type="button" aria-label="Back">
                    <Arrow />
                </HistoryButton>
                <HistoryButton type="button" aria-label="Forward">
                    <Arrow turn={180} />
                </HistoryButton>
                <HistoryButton type="button" aria-label="Recent locations" $narrow>
                    <Chevron color="#ccc" />
                </HistoryButton>
                <HistoryButton type="button" aria-label="Up" $narrow>
                    <Arrow turn={90} color="#666" weight={1.8} />
                </HistoryButton>
                <AddressBox>
                    <MonitorIcon size={18} />
                    <Chevron turn={-90} />
                    <span>MC Computer</span>
                    <Chevron turn={-90} />
                    <AddressTools>
                        <AddressTool type="button" aria-label="Previous locations">
                            <Chevron size={11} />
                        </AddressTool>
                        <AddressTool type="button" aria-label="Refresh" $line>
                            <RefreshIcon />
                        </AddressTool>
                    </AddressTools>
                </AddressBox>
                <SearchBox>
                    <input type="text" placeholder="Search MC Computer" aria-label="Search MC Computer" />
                    <SearchIcon />
                </SearchBox>
            </AddressRow>

            <Panes>
                <NavPane aria-label="Folders">
                    {navGroups.map((group) => (
                        <NavGroup key={group[0].label}>
                            {group.map((item) => (
                                <NavItem key={item.label} type="button" $level={item.level} $selected={item.selected}>
                                    {item.icon}
                                    {item.label}
                                    {item.pinned && <PinIcon />}
                                </NavItem>
                            ))}
                        </NavGroup>
                    ))}
                </NavPane>
                <ScrollBar>
                    <ScrollButton type="button" aria-label="Scroll up">
                        <Chevron turn={180} size={10} weight={1.6} />
                    </ScrollButton>
                    <ScrollTrack>
                        <ScrollThumb style={{ height: "81%" }} />
                    </ScrollTrack>
                    <ScrollButton type="button" aria-label="Scroll down">
                        <Chevron size={10} weight={1.6} />
                    </ScrollButton>
                </ScrollBar>
                <Content>
                    <SectionHead>
                        <Chevron size={12} weight={0.8} />
                        Devices and drives (6)
                    </SectionHead>
                    <DriveGrid>
                        {drives.map((drive) => (
                            <DriveTile
                                key={drive.id}
                                type="button"
                                $selected={selected === drive.id}
                                onClick={() => setSelected(drive.id)}
                            >
                                <DriveIcon kind={drive.kind} />
                                <DriveText>
                                    <DriveLine>{drive.name}</DriveLine>
                                    {drive.used !== undefined && (
                                        <Meter>
                                            <MeterFill style={{ width: `${drive.used}%` }} />
                                        </Meter>
                                    )}
                                    <DriveLine $muted>{drive.detail}</DriveLine>
                                </DriveText>
                            </DriveTile>
                        ))}
                    </DriveGrid>
                </Content>
            </Panes>

            <StatusBar>
                <StatusText>6 items</StatusText>
                <StatusText>1 item selected</StatusText>
                <ViewSwitch>
                    <button type="button" aria-label="Details view">
                        <ListViewIcon />
                    </button>
                    <button type="button" aria-label="Large icons view">
                        <LargeViewIcon />
                    </button>
                </ViewSwitch>
            </StatusBar>
        </Window>
    );
}

export default function App() {
    return (
        <Frame>
            <GlobalStyle />
            <Gradients />
            <Screen>
                <Desktop>
                    {columns.flatMap((column, c) =>
                        column.map((entry, r) => {
                            if (!entry) return <span key={`${c}-${r}`} />;
                            const [label, ShortcutIcon] = entry;
                            return (
                                <Shortcut key={`${c}-${r}`} type="button">
                                    <ShortcutIcon />
                                    {label}
                                </Shortcut>
                            );
                        }),
                    )}
                </Desktop>
                <ExplorerWindow />
                <Taskbar>
                    <StartButton type="button" aria-label="Start">
                        <StartIcon />
                    </StartButton>
                    <TaskButton type="button" aria-label="Command Prompt">
                        <ConsoleIcon />
                    </TaskButton>
                    <TaskButton type="button" aria-label="Network">
                        <NetMonitorIcon />
                    </TaskButton>
                    <TaskButton type="button" aria-label="Keyboard">
                        <KeysIcon />
                    </TaskButton>
                    <TaskButton type="button" aria-label="BOOTICEx64">
                        <DisketteIcon size={22} />
                    </TaskButton>
                    <TaskButton type="button" aria-label="File Explorer">
                        <FolderIcon size={24} />
                    </TaskButton>
                    <TaskButton type="button" aria-label="MC Computer" $active>
                        <PcIcon size={24} />
                    </TaskButton>
                    <Tray>
                        <TrayButton type="button" aria-label="Network status">
                            <TrayNetIcon />
                        </TrayButton>
                        <TrayButton type="button" aria-label="Player">
                            <TrayPlayIcon />
                        </TrayButton>
                        <TrayButton type="button" aria-label="Connection">
                            <TrayPlugIcon />
                        </TrayButton>
                        <TrayButton type="button" aria-label="Display colors">
                            <TrayColorIcon />
                        </TrayButton>
                        <TrayButton type="button" aria-label="Eject media">
                            <TrayUsbIcon />
                        </TrayButton>
                        <TrayButton type="button" aria-label="Volume">
                            <TraySoundIcon />
                        </TrayButton>
                        <Clock>{"9:21:00 AM\n02/09/2021"}</Clock>
                    </Tray>
                </Taskbar>
            </Screen>
        </Frame>
    );
}
